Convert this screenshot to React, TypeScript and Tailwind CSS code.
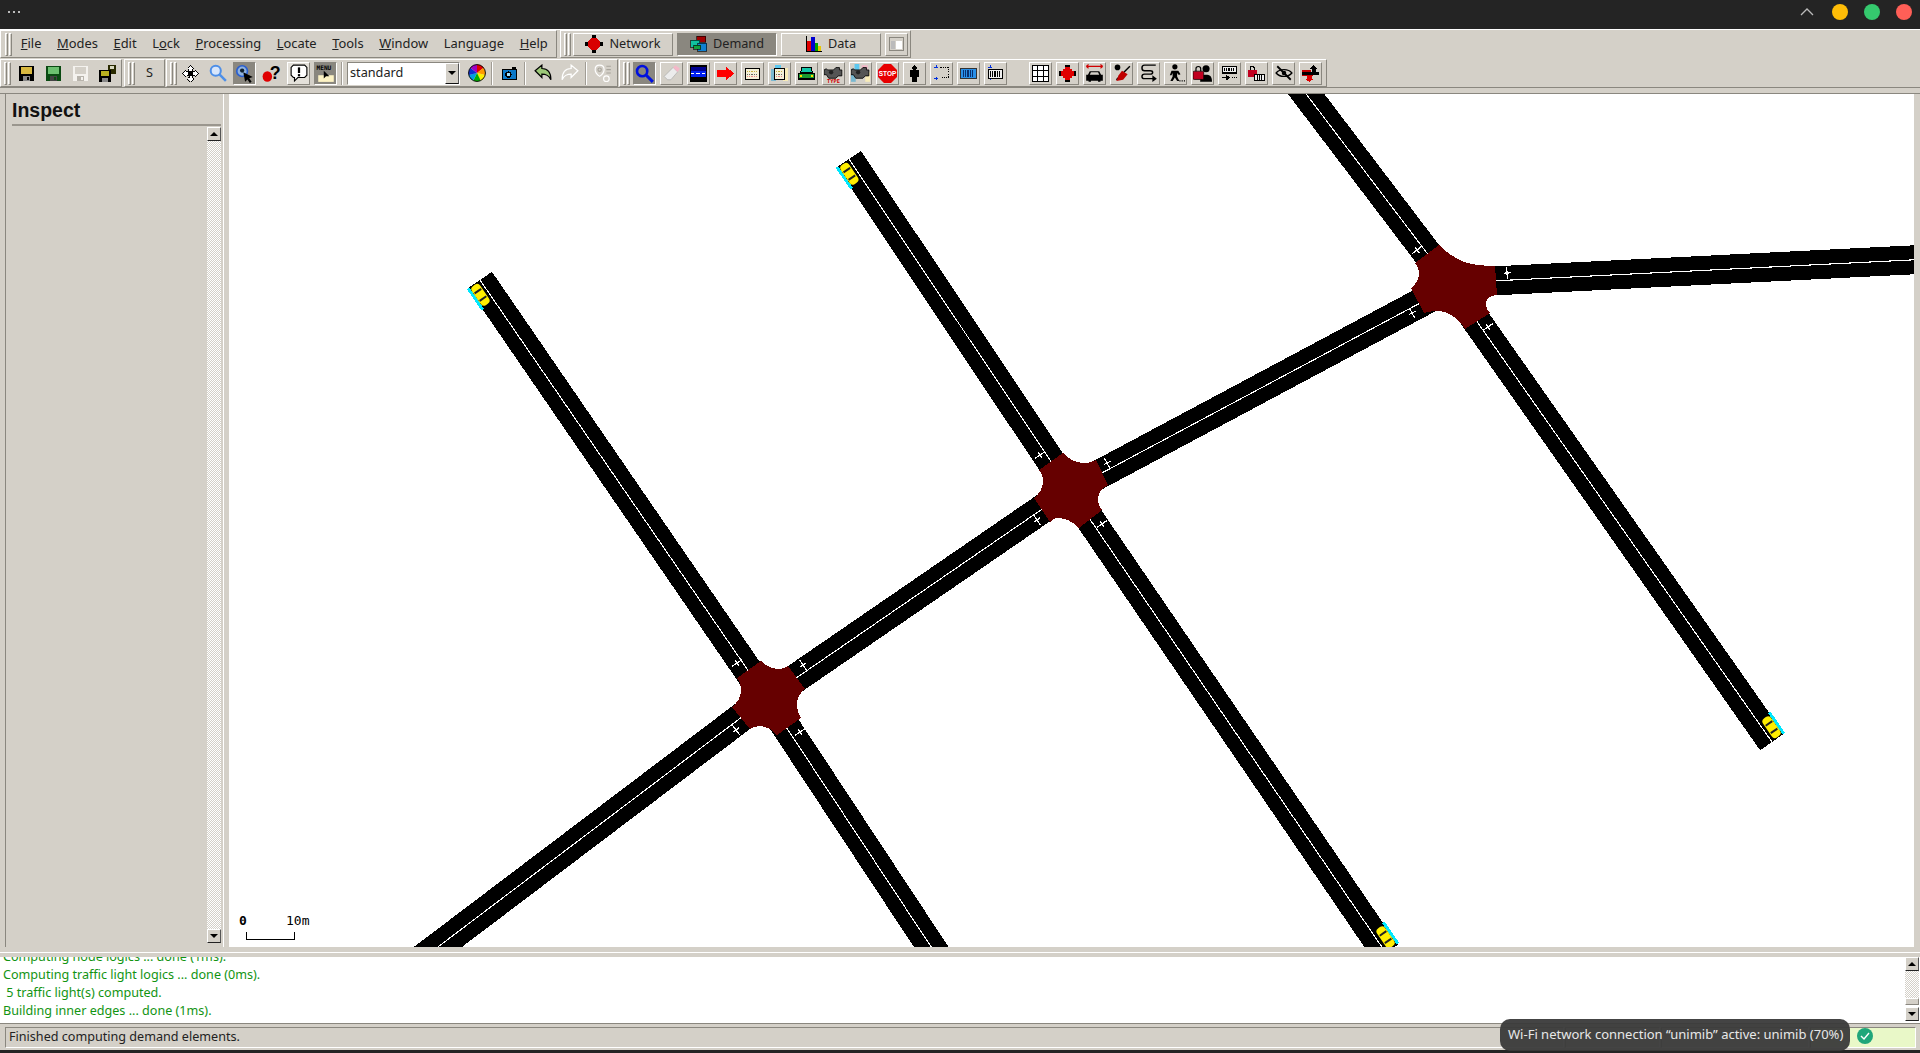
import type { ReactNode } from "react";

const raised = "border border-t-white border-l-white border-r-[#8a877f] border-b-[#8a877f]";
const sunken = "border border-t-[#8a877f] border-l-[#8a877f] border-r-white border-b-white";

function Grip() {
  return (
    <div className="flex gap-px mx-[3px] h-[23px] shrink-0">
      <div className="w-[3px] border border-t-white border-l-white border-r-[#8a877f] border-b-[#8a877f]" />
      <div className="w-[3px] border border-t-white border-l-white border-r-[#8a877f] border-b-[#8a877f]" />
    </div>
  );
}

function Sep() {
  return <div className="w-[2px] h-[23px] border-l border-l-[#a09c94] border-r border-r-white shrink-0" />;
}

function Btn({ kind = "flat", children }: { kind?: "flat" | "up" | "down" | "light"; children: ReactNode }) {
  let cls = "border border-transparent";
  if (kind === "up") cls = raised;
  if (kind === "light") cls = raised + " bg-[#e4e1da]";
  if (kind === "down") cls = "border border-t-[#8a877f] border-l-[#8a877f] border-r-white border-b-white bg-[#8a877f]";
  return <div className={"w-[23px] h-[23px] flex items-center justify-center shrink-0 " + cls}>{children}</div>;
}

function Ico({ children, size = 17 }: { children: ReactNode; size?: number }) {
  return (
    <svg width={size} height={size} viewBox="0 0 16 16" shapeRendering="crispEdges">
      {children}
    </svg>
  );
}

function Floppy({ top, body = "#000", base = "#888" }: { top: string; body?: string; base?: string }) {
  return (
    <Ico>
      <rect x="1" y="1" width="14" height="14" fill={body} />
      <rect x="3" y="2" width="10" height="6" fill={top} />
      <rect x="5" y="10" width="6" height="5" fill={base} />
      <rect x="8" y="11" width="2" height="3" fill={body} />
    </Ico>
  );
}

const FloppyPair = () => (
  <Ico>
    <rect x="8" y="0" width="8" height="8" fill="#2a2a00" />
    <rect x="10" y="1" width="4" height="3" fill="#d8d8c0" />
    <rect x="0" y="5" width="11" height="11" fill="#000" />
    <rect x="2" y="6" width="7" height="4" fill="#b8b020" />
    <rect x="3" y="12" width="5" height="4" fill="#888" />
  </Ico>
);

const Move = () => (
  <Ico>
    <path d="M8 0l3 3-1.500 1v2H12l1-1.500 3 3.500-3 3.500-1-1.500H9.500v2l1.500 1-3 3-3-3 1.500-1v-2H4l-1 1.500L0 8l3-3.500L4 6h2V4L5 3z" fill="#fff" stroke="#000" strokeWidth="1" transform="translate(.5 .5) scale(.94)" />
    <rect x="6" y="6" width="4" height="4" fill="#000" />
  </Ico>
);

const Mag = ({ stroke = "#4d8fe8", fill = "#d8e6fb" }: { stroke?: string; fill?: string }) => (
  <svg width="18" height="18" viewBox="0 0 16 16">
    <circle cx="6" cy="6" r="4.500" fill={fill} stroke={stroke} strokeWidth="1.800" />
    <path d="M9.500 9.500L15 15" stroke={stroke} strokeWidth="2.200" />
  </svg>
);

const InspectIco = () => (
  <svg width="19" height="19" viewBox="0 0 16 16">
    <circle cx="6" cy="6" r="4.500" fill="#8fb2dd" stroke="#2a5fd0" strokeWidth="1.400" />
    <circle cx="6" cy="5.500" r="1.800" fill="#123" />
    <path d="M7 7l8 4-3 1 2 3-1.500 1-2-3-2 2z" fill="#000" />
  </svg>
);

const Help = () => (
  <svg width="19" height="19" viewBox="0 0 16 16">
    <ellipse cx="4.500" cy="10.500" rx="4" ry="4.500" fill="#e00000" />
    <text x="6.500" y="13" fontFamily="Liberation Sans, sans-serif" fontWeight="700" fontSize="15" fill="#000">?</text>
  </svg>
);

const Speech = () => (
  <svg width="18" height="18" viewBox="0 0 16 16">
    <path d="M3 1h10l2 2v7l-2 2H7l-3 3v-3H3l-2-2V3z" fill="#fff" stroke="#000" strokeWidth="1" />
    <rect x="7" y="3" width="2" height="5" fill="#000" />
    <rect x="7" y="9" width="2" height="2" fill="#000" />
  </svg>
);

const MenuIco = () => (
  <svg width="20" height="20" viewBox="0 0 18 18">
    <text x="0.500" y="6" fontFamily="DejaVu Sans Mono, monospace" fontWeight="700" fontSize="5.500" fill="#000">MENU</text>
    <rect x="2" y="11" width="14" height="6" fill="#fdf3c4" />
    <path d="M7 7v7l2-2 3 0z" fill="#000" />
  </svg>
);

const Wheel = () => {
  const cols = ["#e00000", "#ff9a00", "#ffee00", "#00b000", "#00a0e0", "#1030d0", "#a000c0"];
  return (
    <svg width="18" height="18" viewBox="-8 -8 16 16">
      {cols.map((c, i) => {
        const a = (i / 7) * Math.PI * 2 - Math.PI / 2;
        const b = ((i + 1) / 7) * Math.PI * 2 - Math.PI / 2;
        return <path key={c} d={`M0 0L${7.5 * Math.cos(a)} ${7.5 * Math.sin(a)}A7.500 7.500 0 0 1 ${7.5 * Math.cos(b)} ${7.5 * Math.sin(b)}z`} fill={c} />;
      })}
      <circle r="7.500" fill="none" stroke="#000" strokeWidth=".8" />
    </svg>
  );
};

const Camera = () => (
  <Ico>
    <rect x="1" y="4" width="14" height="10" fill="#000" />
    <rect x="2" y="5" width="12" height="8" fill="#0a78c8" />
    <rect x="10" y="2" width="4" height="2" fill="#000" />
    <circle cx="7" cy="9" r="3" fill="#000" />
    <circle cx="7" cy="9" r="1.500" fill="#9fe0ff" />
  </Ico>
);

const Undo = ({ redo = false, fill = "#9cc878", stroke = "#000" }: { redo?: boolean; fill?: string; stroke?: string }) => (
  <svg width="18" height="18" viewBox="0 0 16 16">
    <g transform={redo ? "translate(16 0) scale(-1 1)" : undefined}>
      <path d="M1 6l6-5v3c5 0 8 3 8 10-2-4-4-5-8-5v3z" fill={fill} stroke={stroke} strokeWidth="1.100" />
    </g>
  </svg>
);

const RouteOff = () => (
  <svg width="18" height="18" viewBox="0 0 16 16" fill="none" stroke="#a8a49c" strokeWidth="1">
    <path d="M5 1c3 0 4 2 4 4 0 3-4 6-4 6S1 8 1 5c0-2 1-4 4-4z" stroke="#fff" />
    <circle cx="5" cy="5" r="1.500" />
    <path d="M11 2h4M11 5h4M11 8h4" />
    <circle cx="11" cy="13" r="2.500" stroke="#fff" />
  </svg>
);

const BlueSearch = () => (
  <svg width="19" height="19" viewBox="0 0 16 16">
    <circle cx="6" cy="6" r="4.300" fill="none" stroke="#0010e0" strokeWidth="2.200" />
    <path d="M9.500 9.500L15 15" stroke="#0010e0" strokeWidth="2.600" />
  </svg>
);

const Eraser = () => (
  <svg width="18" height="18" viewBox="0 0 16 16">
    <path d="M1 11l8-8 4 4-6 7H4z" fill="#ececec" stroke="#aaa" strokeWidth=".6" />
    <path d="M9 3l2-2 4 3-2 3z" fill="#f4b8c8" />
  </svg>
);

const RoadIco = () => (
  <Ico>
    <rect x="0" y="0" width="16" height="16" fill="#000" />
    <rect x="1" y="2" width="14" height="4" fill="#000090" />
    <rect x="1" y="6" width="14" height="5" fill="#0020f0" />
    <path d="M1 8h3M6 8h3M11 8h3" stroke="#fff" />
  </Ico>
);

const RedArrow = () => (
  <Ico>
    <path d="M0 5h8V1l8 7-8 7v-4H0z" fill="#f00" />
  </Ico>
);

const PanelDots = ({ x, w }: { x: number; w: number }) => (
  <>
    <rect x={x} y="4" width={w} height="9" fill="#f4f0d8" />
    <path d={`M${x + 1} 6.500h${w - 2}`} stroke="#c8b040" strokeDasharray="1 1" />
    <path d={`M${x + 1} 8.500h${w - 2}`} stroke="#666" strokeDasharray="1 1" />
    <path d={`M${x + 1} 10.500h${w - 2}`} stroke="#e88" strokeDasharray="1 1" />
  </>
);

const Panel = ({ tint = false }: { tint?: boolean }) => (
  <Ico>
    {tint && <rect x="4" y="0" width="5" height="5" fill="#5cc8f0" />}
    {tint && <rect x="0" y="4" width="5" height="11" fill="#7ab8d0" />}
    {tint && <rect x="11" y="3" width="5" height="12" fill="#f8ecb8" />}
    <rect x={tint ? 3 : 1} y="3" width={tint ? 10 : 14} height="11" fill="#000" />
    <PanelDots x={tint ? 4 : 2} w={tint ? 8 : 12} />
  </Ico>
);

const GreenCar = () => (
  <Ico>
    <path d="M3 2h10l1 5 2 1v6H0V8l2-1z" fill="#000" />
    <path d="M4 3h8l1 4H3z" fill="#12c8a8" />
    <rect x="1" y="8" width="14" height="4" fill="#1a9a30" />
    <rect x="2" y="9" width="2" height="2" fill="#ffe000" />
    <rect x="12" y="9" width="2" height="2" fill="#ffe000" />
  </Ico>
);

const Engine = ({ tint = false }: { tint?: boolean }) => (
  <svg width="19" height="19" viewBox="0 0 16 16">
    {tint && <rect x="3" y="0" width="4" height="5" fill="#5cc8f0" />}
    {tint && <rect x="9" y="1" width="5" height="5" fill="#f4b8c8" />}
    {tint && <rect x="0" y="4" width="4" height="11" fill="#7ab8d0" />}
    {tint && <rect x="12" y="7" width="4" height="8" fill="#f8ecb8" />}
    <path d="M2 4l1 1h5l2-2h3v2h2v5h-3l-2 2H4l-2-3H0V5z" fill="#555" stroke="#000" strokeWidth=".7" />
    <circle cx="6" cy="7" r="1.800" fill="#222" />
    {!tint && <text x="8" y="16" textAnchor="middle" fontFamily="DejaVu Sans Mono, monospace" fontWeight="700" fontSize="4.500" fill="#d00000">TYPE</text>}
  </svg>
);

const Stop = () => (
  <svg width="19" height="19" viewBox="0 0 16 16">
    <path d="M5 0h6l5 5v6l-5 5H5l-5-5V5z" fill="#e80000" />
    <text x="8" y="10" textAnchor="middle" fontFamily="Liberation Sans, sans-serif" fontWeight="700" fontSize="5.500" fill="#fff">STOP</text>
  </svg>
);

const Person = () => (
  <Ico>
    <circle cx="8" cy="2.500" r="2.200" fill="#000" />
    <path d="M4 5h8v6h-2v5H6v-5H4z" fill="#000" />
  </Ico>
);

const Vtype = ({ kind }: { kind: number }) => (
  <Ico>
    <path d="M3 0v3M1 2h4M3 3l-2-1M3 11v3M1 13h4" stroke="#0030e0" strokeWidth="1" />
    {kind === 0 && <path d="M7 2h8v10H7" fill="none" stroke="#000" strokeDasharray="1 1" />}
    {kind === 1 && <rect x="1" y="4" width="14" height="9" fill="#000" />}
    {kind === 1 && <rect x="2" y="5" width="12" height="7" fill="#eee" />}
    {kind === 1 && <path d="M3 6h1v5H3zM5 6h1v5H5zM7 6h1v5H7zM9 6h1v5H9zM11 6h1v5h-1z" fill="#000" />}
  </Ico>
);

const Container = () => (
  <Ico>
    <rect x="0" y="3" width="16" height="10" fill="#333" />
    <rect x="1" y="4" width="14" height="8" fill="#2a90e8" />
    <path d="M3 5h1v6H3zM5 5h1v6H5zM7 5h1v6H7zM9 5h1v6H9zM11 5h1v6h-1z" fill="#083070" />
  </Ico>
);

const GridIco = () => (
  <svg width="17" height="17" viewBox="0 0 16 16" shapeRendering="crispEdges">
    <rect x="0.500" y="0.500" width="15" height="15" fill="#fff" stroke="#000" />
    <path d="M5.500 0v16M10.500 0v16M0 5.500h16M0 10.500h16" stroke="#000" />
  </svg>
);

const RedCross = () => (
  <Ico>
    <rect x="6" y="0" width="4" height="16" fill="#000" />
    <rect x="0" y="6" width="16" height="4" fill="#000" />
    <rect x="6" y="2" width="4" height="12" fill="#e00000" />
    <rect x="2" y="6" width="12" height="4" fill="#e00000" />
    <rect x="4" y="4" width="8" height="8" fill="#e00000" />
  </Ico>
);

const CarWide = () => (
  <svg width="19" height="19" viewBox="0 0 16 16">
    <path d="M1 2h14M1 2l2-1.500M1 2l2 1.500M15 2l-2-1.500M15 2l-2 1.500" stroke="#d00000" fill="none" />
    <path d="M4 6h8l1.500 3H15v5h-2v1h-2v-1H5v1H3v-1H1V9h1.500z" fill="#000" />
    <path d="M5 7h6l1 2H4z" fill="#d4d0c8" />
  </svg>
);

const NoPaint = () => (
  <svg width="18" height="18" viewBox="0 0 16 16">
    <circle cx="4" cy="3" r="2.500" fill="#000" />
    <path d="M3 14L15 2" stroke="#000" strokeWidth="1.200" />
    <path d="M5 10l3-4 5 3-4 5-6 1z" fill="#c00000" />
  </svg>
);

const Loop = () => (
  <svg width="18" height="18" viewBox="0 0 16 16" fill="none" stroke="#000" strokeWidth="1.300">
    <path d="M14 1H4C1 1 1 6 4 6h5c3 0 3 3 0 3H4c-3 0-3 4 0 4h8" />
    <path d="M11 10l4 3-4 3z" fill="#000" stroke="none" />
  </svg>
);

const Walk = () => (
  <svg width="18" height="18" viewBox="0 0 16 16">
    <circle cx="7" cy="2.500" r="2.300" fill="#000" />
    <path d="M4 6h6l2 3-1.500.8L9 8v3l2 4H9l-2-3-2 3H3l2-4V8L4 10H2.500z" fill="#000" />
    <path d="M11 15h1M13 15h1M15 15h1" stroke="#000" />
  </svg>
);

const LockPerson = () => (
  <svg width="19" height="19" viewBox="0 0 16 16">
    <circle cx="11" cy="4" r="3" fill="#000" />
    <path d="M6 15c0-5 2-6 5-6s5 1 5 6z" fill="#000" />
    <rect x="0" y="6" width="9" height="7" rx="1" fill="#c00020" stroke="#000" strokeWidth=".6" />
    <path d="M2.500 6V4c0-2.500 4-2.500 4 0v2" fill="none" stroke="#000" />
  </svg>
);

const ContainerRoute = () => (
  <Ico>
    <rect x="1" y="1" width="14" height="7" fill="#000" />
    <rect x="2" y="2" width="12" height="5" fill="#eee" />
    <path d="M3 3h1v3H3zM5 3h1v3H5zM7 3h1v3H7zM9 3h1v3H9zM11 3h1v3h-1z" fill="#000" />
    <path d="M1 12h6M5 10l3 2-3 2z" stroke="#000" fill="#000" />
    <path d="M10 12h1M12 12h1M14 12h1" stroke="#000" />
  </Ico>
);

const LockBox = () => (
  <Ico>
    <rect x="0" y="5" width="8" height="6" fill="#c00020" />
    <path d="M2 5V3c0-2 4-2 4 0v2" fill="none" stroke="#000" />
    <rect x="6" y="8" width="10" height="7" fill="#000" />
    <rect x="7" y="9" width="8" height="5" fill="#eee" />
    <path d="M8 9h1v5H8zM10 9h1v5h-1zM12 9h1v5h-1z" fill="#000" />
  </Ico>
);

const EyeOff = () => (
  <svg width="18" height="18" viewBox="0 0 16 16">
    <path d="M1 8c3-4 11-4 14 0-3 4-11 4-14 0z" fill="none" stroke="#000" strokeWidth="1.200" />
    <circle cx="8" cy="8" r="2" fill="#000" />
    <path d="M2 2l12 12" stroke="#000" strokeWidth="1.600" />
  </svg>
);

const LaneSwap = () => (
  <Ico>
    <path d="M11 0l4 4h-2v3H9V4H7z" fill="#000" />
    <rect x="0" y="7" width="16" height="2" fill="#000" />
    <rect x="0" y="5" width="8" height="2" fill="#c00000" />
    <rect x="0" y="9" width="10" height="1" fill="#c00000" />
    <path d="M5 10h4v3h2l-4 3-4-3h2z" fill="#e00000" />
  </Ico>
);

const NetIco = () => (
  <svg width="18" height="18" viewBox="0 0 16 16" shapeRendering="crispEdges">
    <rect x="6" y="0" width="4" height="16" fill="#000" />
    <rect x="0" y="6" width="16" height="4" fill="#000" />
    <circle cx="8" cy="8" r="5.500" fill="#d80000" />
  </svg>
);

const DemandIco = () => (
  <svg width="17" height="16" viewBox="0 0 16 16" shapeRendering="crispEdges">
    <rect x="6" y="0" width="9" height="6" fill="#a00000" stroke="#000" strokeWidth=".6" />
    <rect x="0" y="4" width="9" height="7" fill="#10c0a0" stroke="#000" strokeWidth=".6" />
    <rect x="7" y="7" width="9" height="8" fill="#1080d0" stroke="#000" strokeWidth=".6" />
    <rect x="3" y="9" width="7" height="4" fill="#10a040" stroke="#000" strokeWidth=".6" />
  </svg>
);

const DataIco = () => (
  <svg width="16" height="17" viewBox="0 0 16 17" shapeRendering="crispEdges">
    <rect x="0" y="0" width="1" height="16" fill="#000" />
    <rect x="0" y="15" width="16" height="1" fill="#000" />
    <rect x="1" y="5" width="4" height="10" fill="#e00000" />
    <rect x="5" y="1" width="4" height="14" fill="#0000d0" />
    <rect x="9" y="7" width="3" height="8" fill="#00a000" />
    <rect x="12" y="10" width="3" height="5" fill="#e8c800" />
  </svg>
);

function ModeBtn({ icon, label, active = false }: { icon: ReactNode; label: string; active?: boolean }) {
  return (
    <div
      className={
        "w-[100px] h-[23px] flex items-center justify-center gap-1.5 text-[12.7px] " +
        (active
          ? "bg-[#8a877f] text-[#222] border border-t-[#8a877f] border-l-[#8a877f] border-r-white border-b-white"
          : raised + " text-[#222]")
      }
    >
      {icon}
      <span>{label}</span>
    </div>
  );
}

const menus: [string, string, string][] = [
  ["", "F", "ile"],
  ["", "M", "odes"],
  ["", "E", "dit"],
  ["L", "o", "ck"],
  ["", "P", "rocessing"],
  ["", "L", "ocate"],
  ["", "T", "ools"],
  ["", "W", "indow"],
  ["Langua", "g", "e"],
  ["", "H", "elp"],
];

function ScrollArrow({ up }: { up: boolean }) {
  return (
    <div className={"w-[14px] h-[14px] flex items-center justify-center bg-[#d4d0c8] border border-t-white border-l-white border-r-[#555] border-b-[#222] shrink-0"}>
      <div
        className={
          "w-0 h-0 border-l-[4px] border-r-[4px] border-l-transparent border-r-transparent " +
          (up ? "border-b-[4px] border-b-black" : "border-t-[4px] border-t-black")
        }
      />
    </div>
  );
}

type P = [number, number];
const J1: P = [767, 698];
const J2: P = [1070, 490];
const J3: P = [1452, 286];

const roads: [P, P][] = [
  [[480, 280], J1],
  [[381, 990], J1],
  [[953, 980], J1],
  [J1, J2],
  [[849, 159], J2],
  [[1386, 953], [1070, 490]],
  [J2, J3],
  [[1275, 53], J3],
  [[1930, 259], [1452, 283]],
  [[1772, 742], J3],
];

// junction outlines with the rounded corners between the arms
const junctions = [
  "M761 661Q768 668 778 669Q784 669 788 666L805 689Q797 695 797 704Q797 712 801 718L777 735Q770 727 760 726Q755 726 750 729L732 707Q741 700 741 690Q741 683 737 678Z",
  "M1063 453Q1072 463 1085 463Q1091 463 1096 460L1108 485Q1098 491 1098 499Q1098 505 1102 510L1079 528Q1069 518 1058 518Q1054 518 1050 522L1034 498Q1043 491 1043 481Q1043 475 1039 470Z",
  "M1439 245Q1452 258 1467 263Q1480 266 1495 266L1497 295Q1486 296 1486 304Q1486 309 1490 313L1465 329Q1454 312 1438 311Q1431 311 1424 313L1411 288Q1419 282 1419 273Q1419 268 1415 263Z",
];

const stops: [number, number, number][] = [
  [737, 663, 55.6], [803, 665, -34.7], [736, 730, -37], [800, 732, 56.8],
  [1040, 455, 56], [1107, 463, -28], [1037, 520, -35], [1102, 524, 55],
  [1417, 250, 52], [1507, 273, -3], [1412, 313, -28], [1488, 327, 55],
];

// end of the road, heading of the car in degrees
const cars: [number, number, number][] = [
  [480, 280, -124.4],
  [849, 159, -124],
  [1772, 742, 55.5],
  [1386, 952, 55.7],
];

function Car({ x, y, a }: { x: number; y: number; a: number }) {
  return (
    <g transform={`translate(${x} ${y}) rotate(${a})`}>
      <rect x="-26" y="-16" width="26" height="3" fill="#00e8ff" shapeRendering="crispEdges" />
      <rect x="-24" y="-13" width="23" height="10" rx="4" fill="#ffee00" />
      <rect x="-18" y="-12" width="2" height="8" fill="#222" />
      <rect x="-9" y="-12" width="2" height="8" fill="#222" />
    </g>
  );
}

function NetCanvas() {
  return (
    <svg className="w-full h-full block" viewBox="229 94 1685 853">
      <g shapeRendering="crispEdges">
        {roads.map(([a, b], i) => (
          <g key={i}>
            <line x1={a[0]} y1={a[1]} x2={b[0]} y2={b[1]} stroke="#000" strokeWidth="29" />
            <line x1={a[0]} y1={a[1]} x2={b[0]} y2={b[1]} stroke="#fff" strokeWidth="1.100" />
          </g>
        ))}
        {stops.map(([x, y, a], i) => (
          <g key={i} transform={`translate(${x} ${y}) rotate(${a})`} stroke="#fff" strokeWidth="1.200">
            <line x1="0" y1="-6" x2="0" y2="6" />
            <line x1="-3" y1="0" x2="4" y2="0" />
          </g>
        ))}
        {junctions.map((d, i) => (
          <path key={i} d={d} fill="#660000" />
        ))}
      </g>
      {cars.map(([x, y, a], i) => (
        <Car key={i} x={x} y={y} a={a} />
      ))}
      <path d="M246.500 932v7.500H294.500V932" fill="none" stroke="#000" strokeWidth="1" shapeRendering="crispEdges" />
      <text x="239" y="925" fontFamily="DejaVu Sans Mono, monospace" fontSize="13" fontWeight="700" fill="#000">0</text>
      <text x="286" y="925" fontFamily="DejaVu Sans Mono, monospace" fontSize="13" fill="#000">10m</text>
    </svg>
  );
}

export default function App() {
  return (
    <div className="relative w-[1920px] h-[1053px] overflow-hidden flex flex-col bg-[#d4d0c8] text-[#222] font-['Noto_Sans',sans-serif]">
      {/* window title bar */}
      <div className="h-[29px] bg-[#242424] flex items-center justify-between pl-[8px] pr-[8px] shrink-0">
        <div className="flex gap-[3px] -mt-[5px]">
          <div className="w-[2px] h-[2px] bg-[#bbb]" />
          <div className="w-[2px] h-[2px] bg-[#bbb]" />
          <div className="w-[2px] h-[2px] bg-[#bbb]" />
        </div>
        <div className="flex items-center gap-[16px] -mt-[5px]">
          <svg width="14" height="8" viewBox="0 0 14 8" className="mr-[2px]">
            <path d="M1 7l6-6 6 6" fill="none" stroke="#bbb" strokeWidth="1.300" />
          </svg>
          <div className="w-[16px] h-[16px] rounded-full bg-[#ffbd07]" />
          <div className="w-[16px] h-[16px] rounded-full bg-[#35c96e]" />
          <div className="w-[16px] h-[16px] rounded-full bg-[#ff5f57]" />
        </div>
      </div>

      {/* menu row */}
      <div className="h-[29px] flex shrink-0 border-t border-t-white">
        <div className={"w-[557px] flex items-center text-[12.9px] " + raised}>
          <div className="flex gap-px ml-[4px] mr-px h-[23px]">
            <div className={"w-[3px] " + raised} />
            <div className={"w-[3px] " + raised} />
          </div>
          {menus.map(([a, b, c]) => (
            <span key={a + b + c} className="px-[7.8px] whitespace-pre">
              {a}
              <u>{b}</u>
              {c}
            </span>
          ))}
        </div>
        <div className={"ml-[3px] w-[351px] flex items-center " + raised}>
          <Grip />
          <div className="flex gap-1 -ml-px">
            <ModeBtn icon={<NetIco />} label="Network" />
            <ModeBtn icon={<DemandIco />} label="Demand" active />
            <ModeBtn icon={<DataIco />} label="Data" />
            <div className={"w-[23px] h-[23px] flex items-center justify-center " + raised}>
              <svg width="15" height="14" viewBox="0 0 15 14" shapeRendering="crispEdges">
                <rect width="15" height="14" fill="#8a877f" />
                <rect x="1" y="1" width="13" height="12" fill="#d4d0c8" />
                <rect x="7" y="4" width="6" height="8" fill="#fff" />
                <rect x="2" y="4" width="4" height="8" fill="#bbb" />
              </svg>
            </div>
          </div>
        </div>
      </div>

      {/* tool row */}
      <div className="h-[29px] mt-px flex shrink-0 border-b border-b-[#8a877f]">
        <div className={"w-[122px] flex items-center " + raised}>
          <Grip />
          <div className="flex gap-1 ml-px">
            <Btn><Floppy top="#d8b840" /></Btn>
            <Btn><Floppy top="#6cc070" body="#0a4a12" base="#444" /></Btn>
            <Btn><Floppy top="#d4d0c8" body="#f4f2ee" base="#b8b4ac" /></Btn>
            <Btn><FloppyPair /></Btn>
          </div>
        </div>
        <div className={"ml-[2px] w-[41px] flex items-center " + raised}>
          <Grip />
          <div className="w-[23px] h-[23px] flex items-center justify-center text-[12.7px]">S</div>
        </div>
        <div className={"ml-px w-[452px] flex items-center " + raised}>
          <Grip />
          <div className="flex gap-1 items-center -ml-px">
            <Btn><Move /></Btn>
            <Btn><Mag /></Btn>
            <Btn kind="down"><InspectIco /></Btn>
            <Btn><Help /></Btn>
            <Btn kind="light"><Speech /></Btn>
            <Btn kind="down"><MenuIco /></Btn>
          </div>
          <div className="ml-[4px] mr-[4px]"><Sep /></div>
          <div className={"w-[113px] h-[23px] flex items-center bg-white text-[12.7px] pl-[2px] " + sunken}>
            <span className="flex-1">standard</span>
            <div className="w-[14px] h-[21px] bg-[#d4d0c8] flex items-center justify-center border border-t-white border-l-white border-r-[#555] border-b-[#111]">
              <div className="w-0 h-0 border-l-[4px] border-r-[4px] border-t-[4px] border-l-transparent border-r-transparent border-t-black" />
            </div>
          </div>
          <div className="ml-[5px]"><Btn><Wheel /></Btn></div>
          <div className="ml-[3px] mr-[5px]"><Sep /></div>
          <Btn><Camera /></Btn>
          <div className="ml-[3px] mr-[5px]"><Sep /></div>
          <Btn><Undo /></Btn>
          <div className="ml-1"><Btn><Undo redo fill="#d4d0c8" stroke="#fff" /></Btn></div>
          <div className="ml-[4px] mr-[4px]"><Sep /></div>
          <Btn><RouteOff /></Btn>
        </div>
        <div className={"ml-px w-[708px] flex items-center " + raised}>
          <Grip />
          <div className="flex gap-1">
            <Btn kind="down"><BlueSearch /></Btn>
            <Btn kind="up"><Eraser /></Btn>
            <Btn kind="up"><RoadIco /></Btn>
            <Btn kind="up"><RedArrow /></Btn>
            <Btn kind="up"><Panel /></Btn>
            <Btn kind="up"><Panel tint /></Btn>
            <Btn kind="up"><GreenCar /></Btn>
            <Btn kind="up"><Engine /></Btn>
            <Btn kind="up"><Engine tint /></Btn>
            <Btn kind="up"><Stop /></Btn>
            <Btn kind="up"><Person /></Btn>
            <Btn kind="up"><Vtype kind={0} /></Btn>
            <Btn kind="up"><Container /></Btn>
            <Btn kind="up"><Vtype kind={1} /></Btn>
          </div>
          <div className="flex gap-1 ml-[22px]">
            <Btn kind="up"><GridIco /></Btn>
            <Btn kind="up"><RedCross /></Btn>
            <Btn kind="up"><CarWide /></Btn>
            <Btn kind="up"><NoPaint /></Btn>
            <Btn kind="up"><Loop /></Btn>
            <Btn kind="up"><Walk /></Btn>
            <Btn kind="up"><LockPerson /></Btn>
            <Btn kind="up"><ContainerRoute /></Btn>
            <Btn kind="up"><LockBox /></Btn>
            <Btn kind="up"><EyeOff /></Btn>
            <Btn kind="up"><LaneSwap /></Btn>
          </div>
        </div>
      </div>

      <div className="h-[6px] shrink-0 border-b border-b-[#8a877f]" />

      {/* main area */}
      <div className="flex-1 min-h-0 flex">
        <div className="w-[229px] shrink-0 pl-[5px] pr-[5px] flex">
          <div className="flex-1 flex flex-col border-l border-l-[#8a877f] border-r border-r-white pl-[6px] pr-[2px]">
            <div className="h-[32px] pt-[3px] shrink-0 font-['Liberation_Sans',sans-serif] font-bold text-[19.5px] text-[#111] border-b-2 border-b-[#9a968e] flex items-center">
              Inspect
            </div>
            <div className="flex-1 min-h-0 flex justify-end">
              <div className="w-[14px] flex flex-col mb-[4px] mt-[1px]">
                <ScrollArrow up />
                <div className="flex-1 bg-[repeating-conic-gradient(#d4d0c8_0_25%,#fff_0_50%)] bg-[length:2px_2px]" />
                <ScrollArrow up={false} />
              </div>
            </div>
          </div>
        </div>
        <div className="flex-1 min-w-0 bg-white">
          <NetCanvas />
        </div>
        <div className="w-[6px] shrink-0" />
      </div>

      {/* splitter */}
      <div className="h-[10px] shrink-0 flex flex-col">
        <div className="h-[5px]" />
        <div className="h-px bg-white" />
      </div>

      {/* message log */}
      <div className="h-[66px] shrink-0 flex bg-white">
        <div className="flex-1 min-w-0 overflow-hidden flex flex-col justify-end pl-[3px] text-[12.6px] leading-[18px] text-[#129412] pb-[3px] whitespace-pre">
          <div>Computing node logics ... done (1ms).</div>
          <div>Computing traffic light logics ... done (0ms).</div>
          <div> 5 traffic light(s) computed.</div>
          <div>Building inner edges ... done (1ms).</div>
        </div>
        <div className="w-[14px] shrink-0 flex flex-col mr-px">
          <ScrollArrow up />
          <div className="flex-1 bg-[repeating-conic-gradient(#d4d0c8_0_25%,#fff_0_50%)] bg-[length:2px_2px]" />
          <div className={"h-[7px] bg-[#d4d0c8] " + raised} />
          <div className="h-[2px]" />
          <ScrollArrow up={false} />
          <div className="h-[2px]" />
        </div>
      </div>

      {/* status bar */}
      <div className="h-[27px] shrink-0 flex gap-px pl-[5px] pr-[4px] pt-[3px] pb-[2px] text-[12.6px] border-t border-t-[#8a877f]">
        <div className={"w-[1559px] flex items-center pl-[3px] " + sunken}>Finished computing demand elements.</div>
        <div className={"w-[95px] " + sunken} />
        <div className={"w-[148px] " + sunken} />
        <div className={"flex-1 bg-[#e9f8c8] " + sunken} />
      </div>
      <div className="h-[3px] shrink-0 bg-[#242424]" />

      {/* desktop notification */}
      <div className="absolute right-[70px] bottom-[2px] w-[350px] h-[32px] rounded-[10px] bg-[#3a3a3a]/95 text-[#e8e8e8] text-[13px] flex items-center pl-[8px] whitespace-nowrap font-['Noto_Sans',sans-serif]">
        Wi-Fi network connection “unimib” active: unimib (70%)
      </div>
      <div className="absolute left-[1857px] bottom-[9px] w-[16px] h-[16px] rounded-full bg-[#1fa67a] flex items-center justify-center">
        <svg width="10" height="8" viewBox="0 0 10 8">
          <path d="M1 4l3 3 5-6" fill="none" stroke="#fff" strokeWidth="1.400" />
        </svg>
      </div>
    </div>
  );
}
